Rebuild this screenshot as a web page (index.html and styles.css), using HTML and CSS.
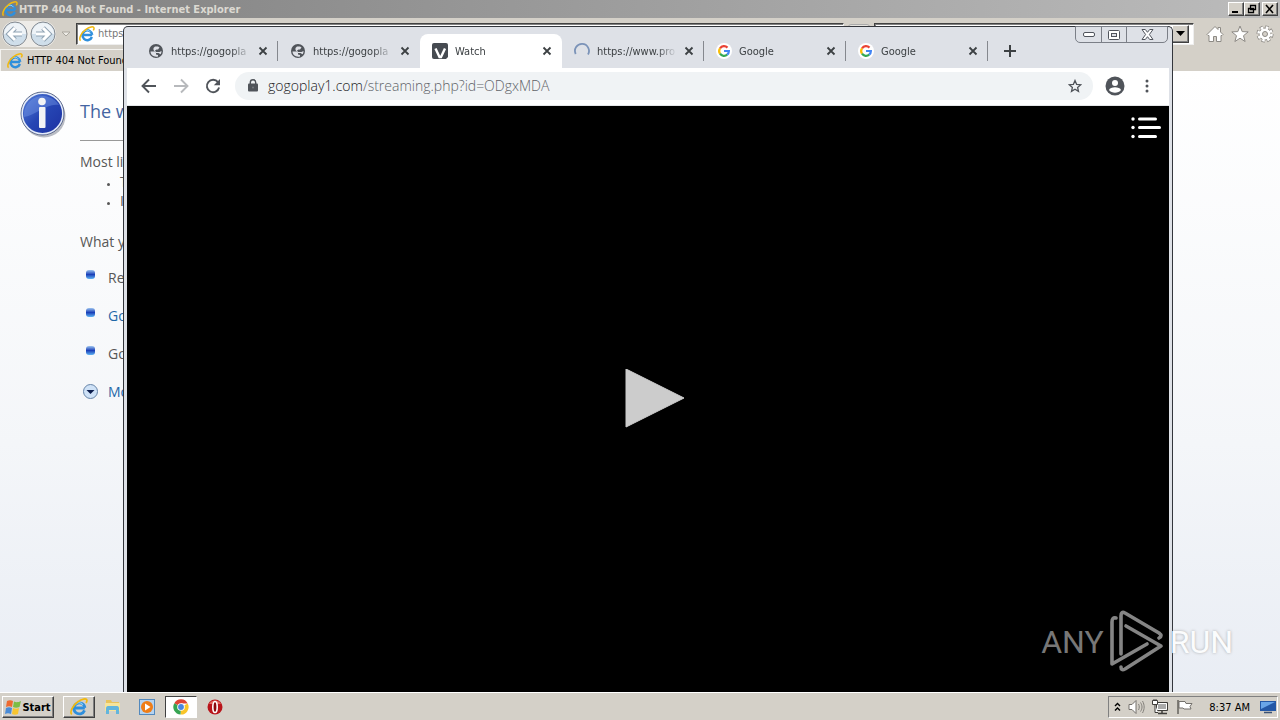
FILE: index.html
```
<!DOCTYPE html>
<html lang="en">
<head>
    <meta charset="UTF-8">
    <meta name="viewport" content="width=device-width, initial-scale=1.0">
    <title>Watch</title>
    <link rel="stylesheet" href="styles.css">
</head>
<body>
    <!-- shared icons -->
    <svg class="sprite" aria-hidden="true">
        <symbol id="ie" viewBox="0 0 16 16">
            <path d="M3.6 8.9h9.6M12.9 11a4.9 4.9 0 1 1 .3-2.2" fill="none" stroke="#2f8fdc" stroke-width="2.5"/>
            <path d="M4.5 6.2a4 4 0 0 1 7 0" fill="none" stroke="#8fd0f8" stroke-width="1"/>
            <path d="M1.6 14.6C-.6 12.600 2.400 6.500 7 3.300c3.600-2.500 7.600-3.200 8-1.500.2.800-.2 1.800-.7 2.600" fill="none" stroke="#f2b90f" stroke-width="1.500"/>
        </symbol>
        <symbol id="globe" viewBox="0 0 16 16">
            <circle cx="8" cy="8" r="7" fill="#50545a"/>
            <path d="M2.500 8.500h4l1.500 1.500v1.500l2 .5v1.500c-4 1-7.500-1.500-7.500-5zM7 3.500h3l1.500 1-1.500 2H8.500L7 7.500l1 1.500h3.500l2-1c0 1.500-.4 2.500-1 3.300L10.500 10H8L5.500 7V5z" fill="#dfe1e7"/>
        </symbol>
        <symbol id="google" viewBox="0 0 16 16">
            <circle cx="8" cy="8" r="8" fill="#fff"/>
            <g fill="none" stroke-width="2.200">
                <path d="M4 5.300A4.900 4.900 0 0 1 11.500 4.600" stroke="#ea4335"/>
                <path d="M4 10.700A4.900 4.900 0 0 1 4 5.300" stroke="#fbbc05"/>
                <path d="M11.200 11.700A4.900 4.900 0 0 1 4 10.700" stroke="#34a853"/>
                <path d="M8 8h4.900a4.900 4.900 0 0 1-1.700 3.700" stroke="#4285f4"/>
            </g>
        </symbol>
        <symbol id="close" viewBox="0 0 10 10">
            <path d="M1.500 1.500l7 7M8.500 1.500l-7 7" stroke="#3c4043" stroke-width="1.800"/>
        </symbol>
    </svg>

    <div class="desktop">
        <!-- Internet Explorer -->
        <section class="ie">
            <header class="ie-title">
                <svg class="icon"><use href="#ie"/></svg>
                <span class="ie-caption">HTTP 404 Not Found - Internet Explorer</span>
                <div class="ie-controls">
                    <button class="classic" aria-label="Minimize"><svg width="12" height="10"><path d="M2 8h6" stroke="#000" stroke-width="2"/></svg></button>
                    <button class="classic" aria-label="Restore"><svg width="12" height="10"><path d="M4.500 1.500h5v4h-5zM4 1.500h6M2.500 4.500h5v4h-5zM2 4.500h6" fill="#d4d0c8" stroke="#000" stroke-width="1.300"/></svg></button>
                    <button class="classic gap" aria-label="Close"><svg width="12" height="10"><path d="M2 1l7 8M9 1L2 9" stroke="#000" stroke-width="1.600"/></svg></button>
                </div>
            </header>
            <div class="ie-nav">
                <div class="ie-arrows">
                    <button aria-label="Back"><svg width="26" height="26" viewBox="0 0 26 26"><circle cx="13" cy="13" r="12" fill="#cfdeea" stroke="#858a90"/><path d="M2 13a11 11 0 0 1 22 0z" fill="#eef3f7"/><path d="M20 13H8M13 7l-6 6 6 6" fill="none" stroke="#8fa2b2" stroke-width="5"/><path d="M20 13H8M13 7l-6 6 6 6" fill="none" stroke="#fff" stroke-width="3"/></svg></button>
                    <button aria-label="Forward"><svg width="26" height="26" viewBox="0 0 26 26"><circle cx="13" cy="13" r="12" fill="#cfdeea" stroke="#858a90"/><path d="M2 13a11 11 0 0 1 22 0z" fill="#eef3f7"/><path d="M6 13h12M13 7l6 6-6 6" fill="none" stroke="#8fa2b2" stroke-width="5"/><path d="M6 13h12M13 7l6 6-6 6" fill="none" stroke="#fff" stroke-width="3"/></svg></button>
                </div>
                <button class="ie-history" aria-label="Recent pages"><svg width="10" height="6"><path d="M1 1h8L5 5z" fill="#eeece7" stroke="#aaa69e"/></svg></button>
                <div class="ie-field address">
                    <svg class="icon"><use href="#ie"/></svg>
                    <input type="text" aria-label="Address" value="https">
                </div>
                <button class="ie-go" aria-label="Go"></button>
                <div class="ie-field search">
                    <input type="text" aria-label="Search">
                    <button class="classic drop" aria-label="Search options"><svg width="9" height="5"><path d="M0 0h9L4.500 5z"/></svg></button>
                </div>
                <div class="ie-tools">
                    <button aria-label="Home"><svg width="18" height="18" viewBox="0 0 18 18"><path d="M1 9.500L9 1.500l3 3v-2h2.500v4.500L17 9.500 16 10.500h-1V16.500h-4.500v-5h-3v5H3v-6H2z" fill="#fff" stroke="#8d8a85"/></svg></button>
                    <button aria-label="Favorites"><svg width="18" height="18" viewBox="0 0 18 18"><path d="M9 1l2.200 5.600 6 .3-4.700 3.800 1.600 5.800L9 13.200l-5.100 3.300 1.600-5.800L.8 6.900l6-.3z" fill="#fff" stroke="#8d8a85"/></svg></button>
                    <button aria-label="Tools"><svg width="18" height="18" viewBox="0 0 18 18"><circle cx="9" cy="9" r="6.800" fill="none" stroke="#8d8a85" stroke-width="3.500" stroke-dasharray="3.300 2.040"/><circle cx="9" cy="9" r="6" fill="#fff" stroke="#8d8a85"/><circle cx="9" cy="9" r="6.500" fill="none" stroke="#fff" stroke-width="2.500" stroke-dasharray="2.500 2.605"/><circle cx="9" cy="9" r="2.500" fill="#d4d0c8" stroke="#8d8a85"/></svg></button>
                </div>
            </div>
            <div class="ie-tabs">
                <a href="#" class="ie-tab"><svg class="icon"><use href="#ie"/></svg>HTTP 404 Not Found</a>
            </div>
            <div class="ie-page">
                <svg class="info" width="48" height="48" viewBox="0 0 48 48">
                    <defs><linearGradient id="blue" x1="0" y1="0" x2="1" y2="1"><stop offset="0" stop-color="#5b84dc"/><stop offset=".5" stop-color="#2646b4"/><stop offset="1" stop-color="#1c2fa0"/></linearGradient></defs>
                    <circle cx="24" cy="25" r="21.500" fill="#b9bcc4"/>
                    <circle cx="22.500" cy="22.500" r="21.500" fill="url(#blue)" stroke="#5c6780"/>
                    <circle cx="22.500" cy="22.500" r="20.300" fill="none" stroke="#e4ebf8" stroke-width="1.500"/>
                    <path d="M4 26a19 19 0 0 1 35-12C26 12 17 24 4 26z" fill="#7da0ea" opacity=".4"/>
                    <circle cx="22" cy="10.500" r="3.800" fill="#f2f3f5"/>
                    <rect x="19" y="16" width="6.500" height="21" rx="1" fill="#f2f3f5"/>
                </svg>
                <div class="ie-message">
                    <h1>The w</h1>
                    <p>Most li</p>
                    <ul class="causes">
                        <li>T</li>
                        <li>I</li>
                    </ul>
                    <p class="try">What y</p>
                    <ul class="actions">
                        <li><span class="dot"></span>Re</li>
                        <li><span class="dot"></span><a href="#">Go</a></li>
                        <li><span class="dot"></span>Go</li>
                        <li><svg width="15" height="15" viewBox="0 0 15 15"><circle cx="7.500" cy="7.500" r="7" fill="#cfe2f7" stroke="#6684a8"/><path d="M3.500 6h8l-4 4z" fill="#0b1c4c"/></svg><a href="#">Mo</a></li>
                    </ul>
                </div>
            </div>
        </section>

        <!-- Chrome -->
        <section class="chrome">
            <div class="window-controls">
                <button aria-label="Minimize"><svg width="12" height="5"><rect x=".5" y=".5" width="11" height="4" rx="1.500" fill="#fff" stroke="#50545c"/></svg></button>
                <button aria-label="Maximize"><svg width="12" height="10"><rect x=".5" y=".5" width="11" height="9" rx="1" fill="#fff" stroke="#50545c"/><rect x="3.500" y="3.500" width="5" height="3" fill="#dfe1e7" stroke="#50545c"/></svg></button>
                <button class="wide" aria-label="Close"><svg width="13" height="11" viewBox="0 0 13 11"><path d="M1 .5h3.300l2.200 2.800L8.700.5H12L8.400 5.500l3.600 5H8.700L6.500 7.700l-2.200 2.800H1l3.600-5z" fill="#fff" stroke="#50545c"/></svg></button>
            </div>
            <nav class="tabs">
                <div class="tab"><svg class="icon"><use href="#globe"/></svg><span>https://gogopla</span><button aria-label="Close tab"><svg width="10" height="10"><use href="#close"/></svg></button></div>
                <div class="tab"><svg class="icon"><use href="#globe"/></svg><span>https://gogopla</span><button aria-label="Close tab"><svg width="10" height="10"><use href="#close"/></svg></button></div>
                <div class="tab active"><svg class="icon" viewBox="0 0 16 16"><path d="M2 0h12a2 2 0 0 1 2 2v12l-2 2H2a2 2 0 0 1-2-2V2a2 2 0 0 1 2-2z" fill="#464b51"/><path d="M3.500 5.500l4 8.500h1.500l4-8.500" fill="none" stroke="#fff" stroke-width="2.400"/></svg><span>Watch</span><button aria-label="Close tab"><svg width="10" height="10"><use href="#close"/></svg></button></div>
                <div class="tab"><svg class="icon" viewBox="0 0 16 16"><path d="M1.700 11A7 7 0 1 1 14 11.500" fill="none" stroke="#7b93b8" stroke-width="1.800"/></svg><span>https://www.pro</span><button aria-label="Close tab"><svg width="10" height="10"><use href="#close"/></svg></button></div>
                <div class="tab"><svg class="icon"><use href="#google"/></svg><span>Google</span><button aria-label="Close tab"><svg width="10" height="10"><use href="#close"/></svg></button></div>
                <div class="tab"><svg class="icon"><use href="#google"/></svg><span>Google</span><button aria-label="Close tab"><svg width="10" height="10"><use href="#close"/></svg></button></div>
                <button class="new-tab" aria-label="New tab"><svg width="12" height="12"><path d="M6 0v12M0 6h12" stroke="#3c4043" stroke-width="2"/></svg></button>
            </nav>
            <div class="toolbar">
                <button aria-label="Back"><svg width="16" height="16" viewBox="0 0 16 16"><path d="M15 8H2M8 1.500L1.500 8 8 14.500" fill="none" stroke="#50545a" stroke-width="1.900"/></svg></button>
                <button aria-label="Forward"><svg width="16" height="16" viewBox="0 0 16 16"><path d="M1 8h13M8 1.500L14.500 8 8 14.500" fill="none" stroke="#b7b9bc" stroke-width="1.900"/></svg></button>
                <button aria-label="Reload"><svg width="16" height="16" viewBox="0 0 16 16"><path d="M13 4.200A6.200 6.200 0 1 0 14.100 9.500" fill="none" stroke="#50545a" stroke-width="1.900"/><path d="M15 1v6.200H8.800z" fill="#50545a"/></svg></button>
                <div class="omnibox">
                    <svg width="10" height="13" viewBox="0 0 10 13"><rect y="4.500" width="10" height="8" rx="1" fill="#50545a"/><path d="M2.300 5V3.500a2.700 2.700 0 0 1 5.400 0V5" fill="none" stroke="#50545a" stroke-width="1.400"/><circle cx="5" cy="8.500" r="1" fill="#777b80"/></svg>
                    <div class="url">gogoplay1.com<span>/streaming.php?id=ODgxMDA</span></div>
                    <button aria-label="Bookmark this tab"><svg width="14" height="14" viewBox="0 0 14 14"><path d="M7 1.500l1.600 3.800 4.100.4-3.100 2.700.9 4L7 10.300l-3.500 2.100.9-4L1.300 5.700l4.100-.4z" fill="none" stroke="#50545a" stroke-width="1.300"/></svg></button>
                </div>
                <button class="profile" aria-label="Profile"><svg width="20" height="20" viewBox="0 0 20 20"><circle cx="10" cy="10" r="9.500" fill="#50545a"/><circle cx="10" cy="7" r="3" fill="#fff"/><path d="M4 14c1-3.700 11-3.700 12 0-2.500 3.600-9.500 3.600-12 0z" fill="#fff"/></svg></button>
                <button aria-label="Menu"><svg width="4" height="14" fill="#50545a"><circle cx="2" cy="2" r="1.500"/><circle cx="2" cy="7" r="1.500"/><circle cx="2" cy="12" r="1.500"/></svg></button>
            </div>
            <main class="player">
                <button class="playlist" aria-label="Playlist"><svg width="30" height="22" viewBox="0 0 30 22"><path d="M8.500 2h16M8.500 10.500h20M8.500 19.500h16" stroke="#fff" stroke-width="3" stroke-linecap="round"/><g fill="#fff"><circle cx="2" cy="2" r="1.700"/><circle cx="2" cy="10.500" r="1.700"/><circle cx="2" cy="19.500" r="1.700"/></g></svg></button>
                <button class="play" aria-label="Play"><svg width="74" height="60" viewBox="0 0 74 60"><path d="M15 0v58l58-29z" fill="#ccc" stroke="#ccc" stroke-linejoin="round"/></svg></button>
            </main>
        </section>

        <div class="watermark">
            <span>ANY</span>
            <svg width="56" height="64" viewBox="0 0 56 64">
                <g fill="none" stroke="#858585" stroke-width="3.600" stroke-linejoin="round" stroke-linecap="round">
                    <path d="M7 8q-4-1-4 4v42l35-20"/>
                    <path d="M12 44V6q0-5 4-3l34 20q4 3 0 5"/>
                    <path d="M12 57q0 4 4 2l36-23-35-20"/>
                </g>
            </svg>
            <span class="run">RUN</span>
        </div>
    </div>

    <!-- taskbar -->
    <footer class="taskbar">
        <button class="classic start"><svg width="17" height="16" viewBox="0 0 17 16"><path d="M2 2c2-1 4-1 6 0L7 8C5 7 3 7 1 8z" fill="#ee6a30"/><path d="M9 2.500c2 1 4 1 7-.5l-1.500 6C12 9 10 9 8 8z" fill="#7cbd45"/><path d="M1 9c2-1 4-1 6 0l-1 6c-2-1-4-1-6 0z" fill="#4a8bd6"/><path d="M8 9c2 1 4 1 6 0l-1 6c-2 1-4 1-6 0z" fill="#f8c52f"/></svg>Start</button>
        <button class="classic task" aria-label="Internet Explorer"><svg width="18" height="18"><use href="#ie"/></svg></button>
        <button class="task" aria-label="Explorer"><svg width="18" height="16" viewBox="0 0 18 16"><path d="M2 1h5l1 2h7v8H2z" fill="#e9c35c"/><path d="M1 4h15v8H1z" fill="#f7e49a"/><path d="M2 15V9.500c0-2 1-2.500 3-2.500h7c2 0 3 .5 3 2.500V15h-3v-4H5v4z" fill="#63b5dc"/></svg></button>
        <button class="task" aria-label="Media Player"><svg width="16" height="16" viewBox="0 0 16 16"><rect x=".5" y=".5" width="15" height="15" fill="#b5d3f0" stroke="#5389bd"/><circle cx="8" cy="8" r="6" fill="#ef7d17"/><path d="M6 4.500v7L11.500 8z" fill="#fff"/></svg></button>
        <button class="task pressed" aria-label="Chrome"><svg width="16" height="16" viewBox="0 0 16 16"><path d="M8 8L1.300 4.200A7.500 7.500 0 0 1 14.700 4.500H8z" fill="#df4535"/><path d="M8 8l6.700-3.500A7.500 7.500 0 0 1 7.500 15.500z" fill="#f9c529"/><path d="M8 8l-.5 7.500A7.500 7.500 0 0 1 1.300 4.200z" fill="#37a452"/><circle cx="8" cy="8" r="3.800" fill="#fff"/><circle cx="8" cy="8" r="2.900" fill="#4a86e0"/></svg></button>
        <button class="task" aria-label="Opera"><svg width="16" height="16" viewBox="0 0 16 16"><circle cx="8" cy="8" r="7.500" fill="#b9141b"/><path d="M2 5a7 7 0 0 1 12 0z" fill="#e5665e"/><ellipse cx="8" cy="8" rx="2.200" ry="5.500" fill="#8c090e" stroke="#fff" stroke-width="1.600"/></svg></button>
        <div class="tray">
            <svg width="7" height="10" viewBox="0 0 7 10"><path d="M1 4l2.500-2.500L6 4M1 8.500L3.500 6 6 8.500" fill="none" stroke="#000" stroke-width="1.400"/></svg>
            <svg width="17" height="16" viewBox="0 0 17 16"><path d="M1 5.500h3l4-4v13l-4-4H1z" fill="#fff" stroke="#74716c"/><path d="M10.500 5c1 2 1 4 0 6M12.500 3.500c2 3 2 6 0 9M14.500 2c2.200 4 2.200 8 0 12" fill="none" stroke="#84817c"/></svg>
            <svg width="17" height="16" viewBox="0 0 17 16"><path d="M4.500 3.500h11v8h-11z" fill="#aaa" stroke="#3f3d3a"/><path d="M5.500 4.500h9v6h-9z" fill="none" stroke="#fff"/><path d="M6 14.500h9M10 12v2" fill="none" stroke="#3f3d3a" stroke-width="1.500"/><path d="M.5 1.500h5v4h-5zM3 5.500v8h3" fill="#fff" stroke="#3f3d3a"/><path d="M2 0v2M4 0v2" stroke="#3f3d3a"/></svg>
            <svg width="17" height="16" viewBox="0 0 17 16"><path d="M3 2.500h6l1 2h6l-2 3 1 2.500H8L7 9H3z" fill="#fff" stroke="#74716c"/><path d="M2 1v14" stroke="#65625d" stroke-width="1.500"/></svg>
            <time>8:37 AM</time>
            <svg width="16" height="14" viewBox="0 0 16 14"><path d="M0 1h16v10H0z" fill="#2458a6"/><path d="M1 2h14L1 9z" fill="#69a5e8"/><path d="M4 12.500h8" stroke="#3a5275" stroke-width="1.500"/></svg>
        </div>
    </footer>
</body>
</html>
```
FILE: styles.css
```
/* General styling */
* {
    box-sizing: border-box;
}

body {
    margin: 0;
    height: 100vh;
    display: flex;
    flex-direction: column;
    overflow: hidden;
    background: #d4d0c8;
    font-family: "DejaVu Sans Condensed", "DejaVu Sans", sans-serif;
    font-size: 11px;
    color: #000;
}

button, input {
    margin: 0;
    padding: 0;
    border: none;
    background: none;
    font: inherit;
    color: inherit;
}

button {
    display: flex;
    align-items: center;
    justify-content: center;
}

svg {
    flex: none;
}

a {
    text-decoration: none;
}

.sprite {
    position: absolute;
    width: 0;
    height: 0;
}

.icon {
    width: 16px;
    height: 16px;
}

.classic {
    background: #d4d0c8;
    border: 1px solid;
    border-color: #fff #404040 #404040 #fff;
    box-shadow: inset -1px -1px #808080;
}

.desktop {
    position: relative;
    flex: 1;
    min-height: 0;
    overflow: hidden;
}

/* Internet Explorer */
.ie {
    height: 100%;
    display: flex;
    flex-direction: column;
}

.ie-title {
    height: 18px;
    display: flex;
    align-items: center;
    gap: 1px;
    padding: 0 2px;
    background: linear-gradient(to right, #808080, #bcbcbc);
    color: #dcd9d2;
    font-weight: bold;
}

.ie-caption {
    flex: 1;
    white-space: nowrap;
}

.ie-controls {
    display: flex;
}

.ie-controls .classic {
    width: 16px;
    height: 14px;
}

.ie-controls .gap {
    margin-left: 2px;
}

.ie-nav {
    height: 31px;
    display: flex;
    align-items: center;
    padding: 0 6px 0 2px;
}

.ie-arrows {
    display: flex;
    gap: 2px;
    border-radius: 14px;
    background: #eeece8;
}

.ie-history {
    width: 20px;
    height: 20px;
}

.ie-field {
    height: 22px;
    display: flex;
    align-items: center;
    background: #fff;
    border: 1px solid;
    border-color: #404040 #eee #eee #404040;
    box-shadow: inset 1px 1px #808080;
}

.ie-field input {
    flex: 1;
    min-width: 0;
    color: #777;
}

.address {
    flex: 17;
    gap: 3px;
    padding-left: 2px;
}

.ie-go {
    width: 22px;
    height: 20px;
    margin: 0 4px;
    border: 1px solid #aaa;
    border-radius: 3px;
    background: #e6e4df;
}

.search {
    flex: 7;
    padding-right: 4px;
}

.drop {
    width: 17px;
    height: 18px;
}

.ie-tools {
    display: flex;
    gap: 7px;
    margin-left: 12px;
}

.ie-tabs {
    height: 22px;
    display: flex;
}

.ie-tab {
    width: 220px;
    display: flex;
    align-items: center;
    gap: 4px;
    padding-left: 6px;
    border-top: 1px solid #f4f3f0;
    border-left: 1px solid #f4f3f0;
    color: #000;
}

.ie-page {
    flex: 1;
    display: flex;
    align-items: flex-start;
    gap: 12px;
    padding: 20px;
    background: linear-gradient(#fff, #f4f6f9 60%, #e9edf4);
    color: #575757;
    font-family: "Open Sans", "Noto Sans", sans-serif;
    font-size: 14px;
    line-height: 19px;
}

.ie-message {
    flex: 1;
    max-width: 720px;
}

.ie-page h1 {
    margin: 0 0 11px;
    padding: 8px 0 16px;
    border-bottom: 1px solid #999;
    color: #4465a2;
    font-size: 18px;
    font-weight: normal;
    line-height: 25px;
}

.ie-page p {
    margin: 0;
}

.ie-page ul {
    margin: 0;
    padding: 0;
    list-style: none;
}

.ie-page .causes {
    padding-left: 40px;
    margin: 1px 0 22px;
    list-style: disc;
}

.causes li::marker {
    font-size: 9px;
}

.actions li {
    display: flex;
    align-items: center;
    gap: 10px;
    padding-left: 3px;
    margin-top: 19px;
}

.ie-page .try {
    margin-bottom: -2px;
}

.actions a {
    color: #1f68a8;
}

.dot {
    width: 9px;
    height: 9px;
    margin: 0 3px 6px;
    border-radius: 3px;
    background: linear-gradient(#9cc4f0, #1a3fb8 50%, #5fb4f4);
}

/* Chrome window */
.chrome {
    position: absolute;
    top: 26px;
    right: 107px;
    bottom: 0;
    left: 123px;
    display: flex;
    flex-direction: column;
    padding: 0 3px;
    border: 1px solid #33363c;
    border-bottom: none;
    border-radius: 5px 5px 0 0;
    background: #dee1e7;
}

.window-controls {
    position: absolute;
    top: -1px;
    right: 4px;
    display: flex;
    border: 1px solid #7b7f87;
    border-radius: 0 0 5px 5px;
}

.window-controls button {
    width: 25px;
    height: 15px;
}

.window-controls .wide {
    width: 41px;
}

.window-controls button + button {
    border-left: 1px solid #7b7f87;
}

.tabs {
    height: 41px;
    display: flex;
    padding: 7px 100px 0 9px;
}

.tab {
    flex: 0 1 142px;
    min-width: 0;
    display: flex;
    align-items: center;
    gap: 7px;
    padding: 0 10px 0 12px;
    color: #3c4043;
    background: linear-gradient(#85888e, #85888e) right center / 1px 20px no-repeat;
}

.tab span {
    flex: 1;
    min-width: 0;
    overflow: hidden;
    white-space: nowrap;
    -webkit-mask-image: linear-gradient(to right, #000 75%, transparent);
    mask-image: linear-gradient(to right, #000 75%, transparent);
}

.tab.active {
    background: #fff;
    border-radius: 8px 8px 0 0;
}

.tab:has(+ .active) {
    background: none;
}

.new-tab {
    width: 44px;
}

.toolbar {
    height: 38px;
    display: flex;
    align-items: center;
    gap: 16px;
    padding: 0 20px 2px 14px;
    background: #fff;
    border-bottom: 1px solid #e4e6e8;
}

.omnibox {
    flex: 1;
    height: 28px;
    display: flex;
    align-items: center;
    gap: 10px;
    margin: 0 -4px 0 -2px;
    padding: 0 11px 0 13px;
    border-radius: 14px;
    background: #f0f3f5;
}

.profile {
    margin: 0 4px 0 0;
}

.url {
    flex: 1;
    color: #202124;
    font-family: "Open Sans", "Noto Sans", sans-serif;
    font-size: 14px;
    font-weight: 300;
    white-space: nowrap;
}

.url span {
    color: #5f6368;
}

.player {
    position: relative;
    flex: 1;
    display: flex;
    align-items: center;
    justify-content: center;
    background: #000;
}

.playlist {
    position: absolute;
    top: 11px;
    right: 8px;
}

/* Watermark in the corner */
.watermark {
    position: absolute;
    right: 47px;
    bottom: 18px;
    display: flex;
    align-items: center;
    gap: 5px;
    color: #777;
    font-family: Roboto, sans-serif;
    font-size: 32px;
    line-height: 64px;
}

.watermark .run {
    color: #fbfcfd;
    text-shadow: 0 0 3px #aaa;
}

/* Taskbar */
.taskbar {
    height: 28px;
    display: flex;
    align-items: center;
    padding: 1px 2px 0;
    border-top: 1px solid #fff;
}

.start {
    width: 52px;
    height: 22px;
    margin-right: 9px;
    font-weight: bold;
    font-size: 11px;
}

.task {
    width: 32px;
    height: 22px;
    margin-right: 2px;
}

.pressed {
    background: #fff;
    border: 1px solid;
    border-color: #404040 #fff #fff #404040;
}

.tray {
    height: 22px;
    display: flex;
    align-items: center;
    gap: 7px;
    margin-left: auto;
    padding: 0 1px 0 5px;
    border: 1px solid;
    border-color: #808080 #fff #fff #808080;
}

.tray time {
    margin: 0 3px 0 9px;
}
```
